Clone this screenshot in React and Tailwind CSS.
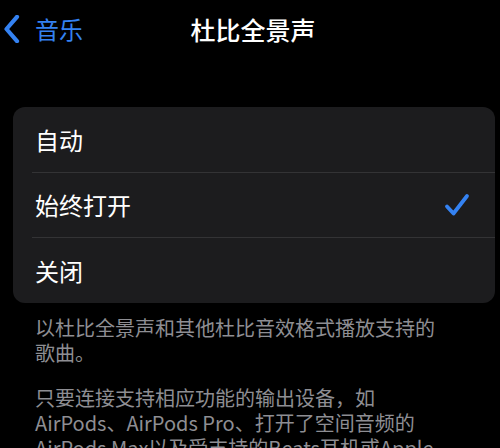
const FONT = { fontFamily: '"Noto Sans CJK SC", "Noto Sans", sans-serif' };

const OPTIONS = [
  { label: '自动', h: 'h-[65px]' },
  { label: '始终打开', h: 'h-[64px]', checked: true },
  { label: '关闭', h: 'h-[65px]' },
];

function Chevron() {
  return (
    <svg width="18" height="28" viewBox="0 0 18 28" fill="none">
      <path
        d="M14 1.8 L3.5 14 L14 26.2"
        stroke="#3482f2"
        strokeWidth="4.2"
        strokeLinecap="round"
        strokeLinejoin="round"
      />
    </svg>
  );
}

function Check() {
  return (
    <svg width="26" height="24" viewBox="0 0 26 24" fill="none">
      <path
        d="M3 13.5 L9.5 20.5 L23 3"
        stroke="#3482f2"
        strokeWidth="3.8"
        strokeLinecap="round"
        strokeLinejoin="round"
      />
    </svg>
  );
}

export default function App() {
  return (
    <div className="h-[448px] w-[500px] overflow-hidden bg-black" style={FONT}>
      <header className="grid h-[43px] grid-cols-[1fr_auto_1fr] items-center pt-[15px]">
        <button type="button" className="flex items-center gap-[14px] pl-[3px] text-[24px] leading-[28px] text-[#3482f2]">
          <Chevron />
          <span>音乐</span>
        </button>
        <h1 className="pl-[6px] text-[25px] font-medium leading-[28px] text-white">杜比全景声</h1>
        <div />
      </header>

      <section className="mx-[13px] mt-[64px] w-[482px] overflow-hidden rounded-[12px] bg-[#1c1c1e]">
        {OPTIONS.map((opt, idx) => (
          <div key={opt.label}>
            {idx > 0 && <div className="ml-[19px] h-px bg-[#333335]" />}
            <div className={`flex items-center justify-between pl-[22px] pr-[25px] ${opt.h}`}>
              <span className="text-[24px] leading-[28px] text-white">{opt.label}</span>
              {opt.checked && <Check />}
            </div>
          </div>
        ))}
      </section>

      <div className="mt-[12px] whitespace-nowrap px-[35px] text-[20px] leading-[25px] text-[#8e8e93]">
        <p>
          以杜比全景声和其他杜比音效格式播放支持的
          <br />
          歌曲。
        </p>
        <p className="mt-[20px]">
          只要连接支持相应功能的输出设备，如
          <br />
          AirPods、AirPods Pro、打开了空间音频的
          <br />
          AirPods Max以及受支持的Beats耳机或Apple
        </p>
      </div>
    </div>
  );
}
